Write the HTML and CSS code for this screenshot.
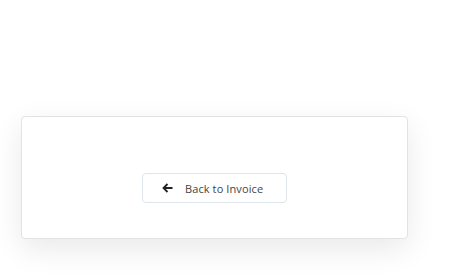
FILE: index.html
```html
<!DOCTYPE html>
<html>
<head>
    <title>Payment</title>
    <link rel="stylesheet" href="styles.css">
</head>
<body>
    <div class="page">
        <div class="card">
            <button class="back-btn" type="button">
                <svg class="back-icon" width="11" height="10" viewBox="0 0 11 10">
                    <path d="M10.5 5H1.8M5.5 1L1.5 5L5.5 9" fill="none" stroke="#222" stroke-width="1.8"/>
                </svg>
                <span>Back to Invoice</span>
            </button>
        </div>
    </div>
</body>
</html>
```

FILE: styles.css
```css
body {
    margin: 0;
    background: #fff;
    font-family: "Open Sans", "Liberation Sans", sans-serif;
}

.page {
    box-sizing: border-box;
    min-height: 100vh;
    padding: 116px 0 0 21px;
}

.card {
    box-sizing: border-box;
    width: 387px;
    height: 123px;
    padding-top: 56px;
    background: #fff;
    border: 1px solid #e3e3e3;
    border-radius: 4px;
    box-shadow: 0 10px 30px rgba(0, 0, 0, 0.09);
    display: flex;
    justify-content: center;
    align-items: flex-start;
}

.back-btn {
    box-sizing: border-box;
    width: 145px;
    height: 30px;
    padding: 0 0 0 19px;
    background: #fff;
    border: 1px solid #dfe5ec;
    border-radius: 4px;
    display: flex;
    align-items: center;
    gap: 12px;
    font-family: inherit;
    font-size: 11px;
    letter-spacing: 0.1px;
    color: #444;
    cursor: pointer;
}

.back-icon {
    display: block;
}
```
